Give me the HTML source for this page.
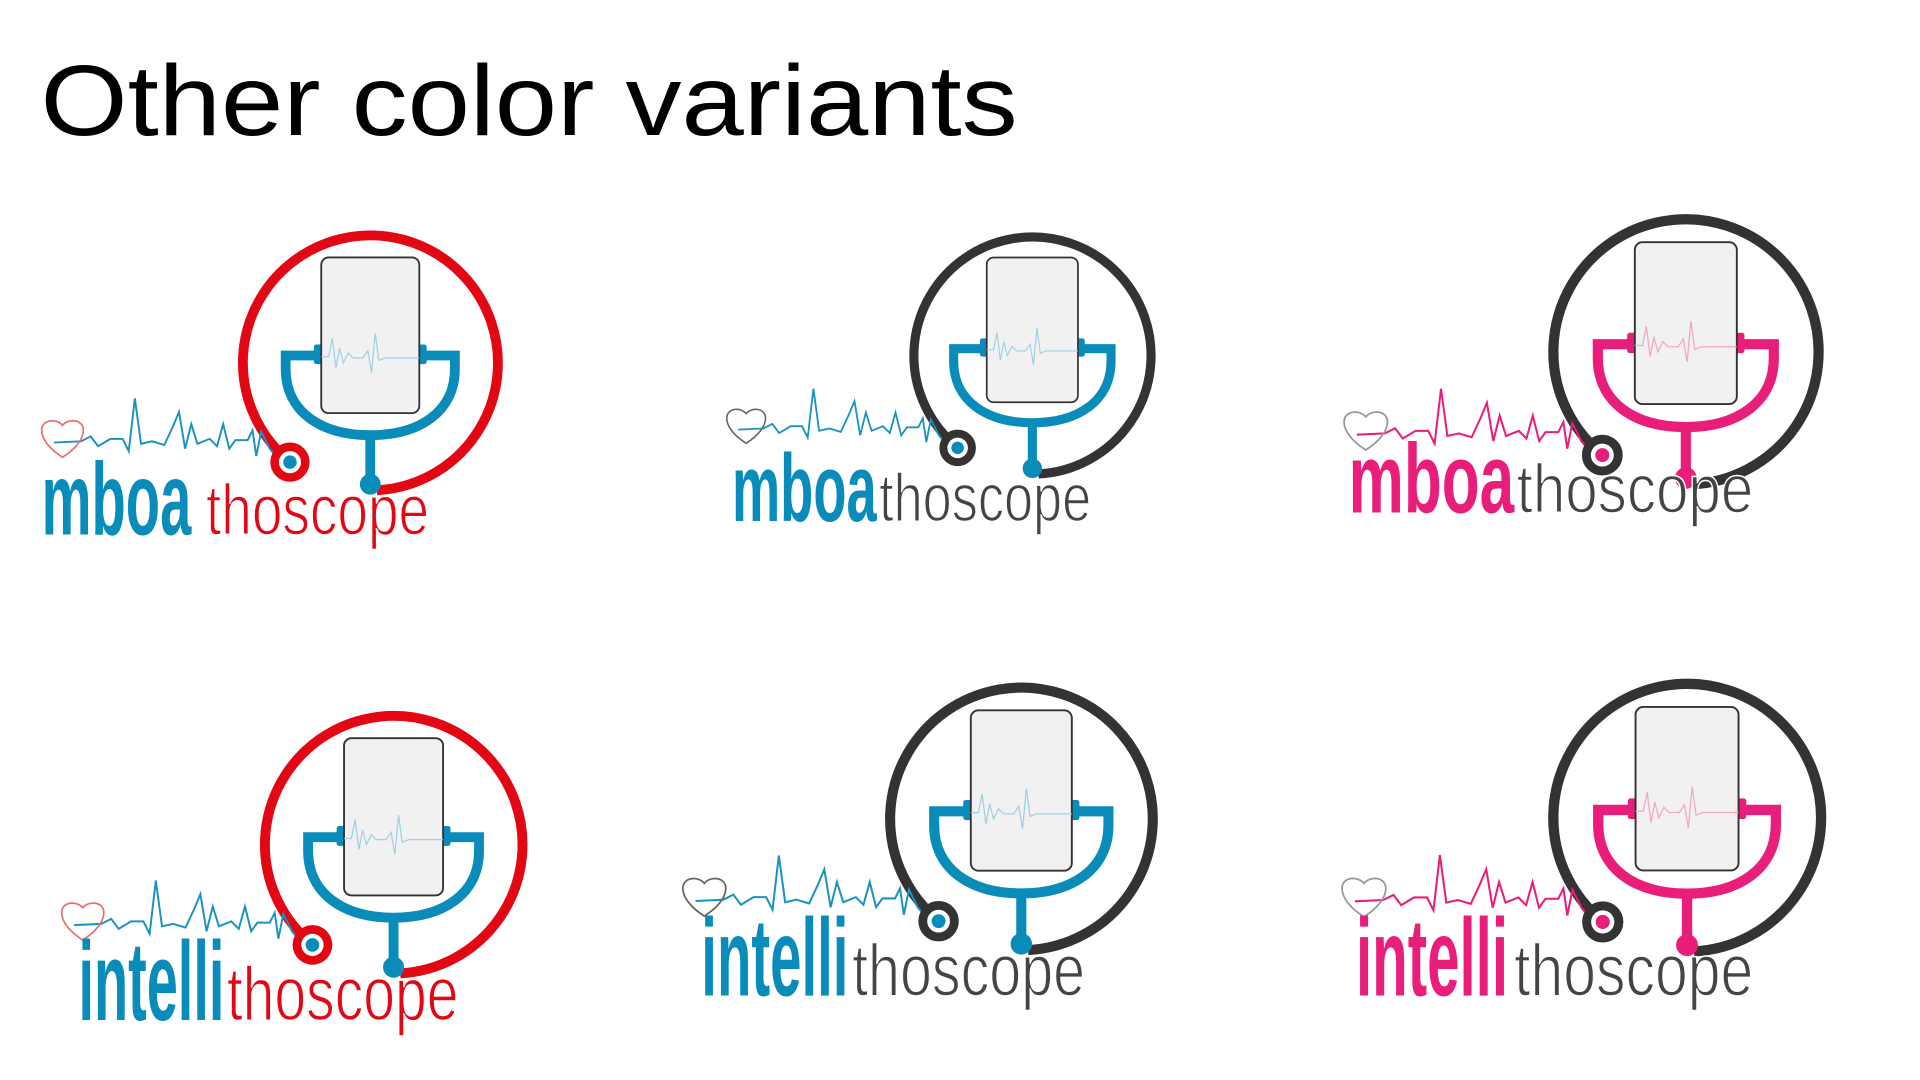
<!DOCTYPE html>
<html><head><meta charset="utf-8"><style>
html,body{margin:0;padding:0;background:#fff;width:1920px;height:1080px;overflow:hidden}
svg{display:block}
.m{font-family:"Liberation Sans",sans-serif;font-weight:bold}
.t{font-family:"Liberation Sans",sans-serif;font-weight:normal;stroke:#fff;stroke-width:1.3}
</style></head><body>
<svg width="1920" height="1080" viewBox="0 0 1566 881" preserveAspectRatio="none" xmlns="http://www.w3.org/2000/svg">
<defs>
<g id="icon">
  <path d="M -65.4 80.8 A 104 104 0 1 1 5.4 103.9" fill="none" style="stroke:var(--ring)" stroke-width="8"/>
  <path d="M -258 65 L -236 64 L -228 60 L -222 68 L -212 62 L -202 62 L -197 72 L -192 29 L -187 66 L -178 64 L -168 67 L -161 52 L -156 40 L -151 70 L -146 50 L -141 66 L -131 62 L -125 68 L -120 50 L -115 70 L -110 63 L -100 63 L -96 55 L -93 76 L -89 56 L -82 70 L -72 82 L -60 82" fill="none" style="stroke:var(--ecg)" stroke-width="1.6"/>
  <path d="M -251 77 C -262 70 -268 62 -268 55 C -268 46 -256 45 -251 51 C -246 45 -234 46 -234 55 C -234 62 -240 70 -251 77 Z" fill="none" style="stroke:var(--heart)" stroke-width="1.4"/>
  <circle cx="-65.5" cy="81" r="12.5" fill="#fff" style="stroke:var(--ring)" stroke-width="7"/>
  <circle cx="-65.5" cy="81" r="5.5" style="fill:var(--st)"/>
  <path d="M -40 -6 H -69 V 5 C -69 40 -40 59 0 59 C 40 59 69 40 69 5 V -6 H 40" fill="none" style="stroke:var(--st)" stroke-width="8"/>
  <rect x="-46" y="-15" width="8" height="16" rx="2" style="fill:var(--st)"/>
  <rect x="38" y="-15" width="8" height="16" rx="2" style="fill:var(--st)"/>
  <line x1="0" y1="59" x2="0" y2="97" style="stroke:var(--st)" stroke-width="8"/>
  <circle cx="0" cy="99" r="8.5" style="fill:var(--st)"/>
  <rect x="-40" y="-86" width="80" height="127" rx="6" fill="#f1f1f1" stroke="#333" stroke-width="1.5"/>
  <path d="M -40 -5 L -34 -5 L -31 -20 L -28 4 L -25 -12 L -22 0 L -18 -8 L -14 -4 L -6 -4 L -2 -10 L 1 8 L 4 -24 L 7 -2 L 12 -4 L 40 -4" fill="none" style="stroke:var(--mini)" stroke-width="1"/>
</g>
</defs>

<text x="33" y="110" font-family="Liberation Sans, sans-serif" font-size="82" fill="#000" textLength="797" lengthAdjust="spacingAndGlyphs">Other color variants</text>

<!-- Logo 1 -->
<use href="#icon" transform="translate(302,296)" style="--ring:#e30613;--st:#0a8cbb;--ecg:#1b93c0;--heart:#ec6d6d;--mini:#9fd0e4"/>
<text class="m" x="34" y="436" font-size="84" fill="#0a8cbb" textLength="122" lengthAdjust="spacingAndGlyphs">mboa</text>
<text class="t" x="168" y="436" font-size="58" fill="#e30613" textLength="182" lengthAdjust="spacingAndGlyphs">thoscope</text>

<!-- Logo 2 -->
<use href="#icon" transform="translate(842,290) scale(0.93)" style="--ring:#333;--st:#0a8cbb;--ecg:#1b93c0;--heart:#666;--mini:#9fd0e4"/>
<text class="m" x="597" y="425" font-size="78" fill="#0a8cbb" textLength="118" lengthAdjust="spacingAndGlyphs">mboa</text>
<text class="t" x="717" y="425" font-size="55" fill="#444" textLength="173" lengthAdjust="spacingAndGlyphs">thoscope</text>

<!-- Logo 3 -->
<use href="#icon" transform="translate(1375,287) scale(1.04)" style="--ring:#333;--st:#e91e7a;--ecg:#e91e7a;--heart:#999;--mini:#f2a7c8"/>
<text class="m" x="1100" y="418" font-size="80" fill="#e91e7a" textLength="135" lengthAdjust="spacingAndGlyphs">mboa</text>
<text class="t" x="1237" y="418" font-size="56" fill="#444" textLength="193" lengthAdjust="spacingAndGlyphs">thoscope</text>

<!-- Logo 4 -->
<use href="#icon" transform="translate(321,689) scale(1.01)" style="--ring:#e30613;--st:#0a8cbb;--ecg:#1b93c0;--heart:#ec6d6d;--mini:#9fd0e4"/>
<text class="m" x="64" y="832" font-size="92" fill="#0a8cbb" textLength="119" lengthAdjust="spacingAndGlyphs">intelli</text>
<text class="t" x="185" y="832" font-size="62" fill="#e30613" textLength="189" lengthAdjust="spacingAndGlyphs">thoscope</text>

<!-- Logo 5 -->
<use href="#icon" transform="translate(833,668) scale(1.03)" style="--ring:#333;--st:#0a8cbb;--ecg:#1b93c0;--heart:#666;--mini:#9fd0e4"/>
<text class="m" x="572" y="812" font-size="90" fill="#0a8cbb" textLength="120" lengthAdjust="spacingAndGlyphs">intelli</text>
<text class="t" x="695" y="812" font-size="60" fill="#444" textLength="190" lengthAdjust="spacingAndGlyphs">thoscope</text>

<!-- Logo 6 -->
<use href="#icon" transform="translate(1376,667) scale(1.05)" style="--ring:#333;--st:#e91e7a;--ecg:#e91e7a;--heart:#999;--mini:#f2a7c8"/>
<text class="m" x="1106" y="812" font-size="90" fill="#e91e7a" textLength="124" lengthAdjust="spacingAndGlyphs">intelli</text>
<text class="t" x="1235" y="812" font-size="60" fill="#444" textLength="195" lengthAdjust="spacingAndGlyphs">thoscope</text>
</svg>
</body></html>
